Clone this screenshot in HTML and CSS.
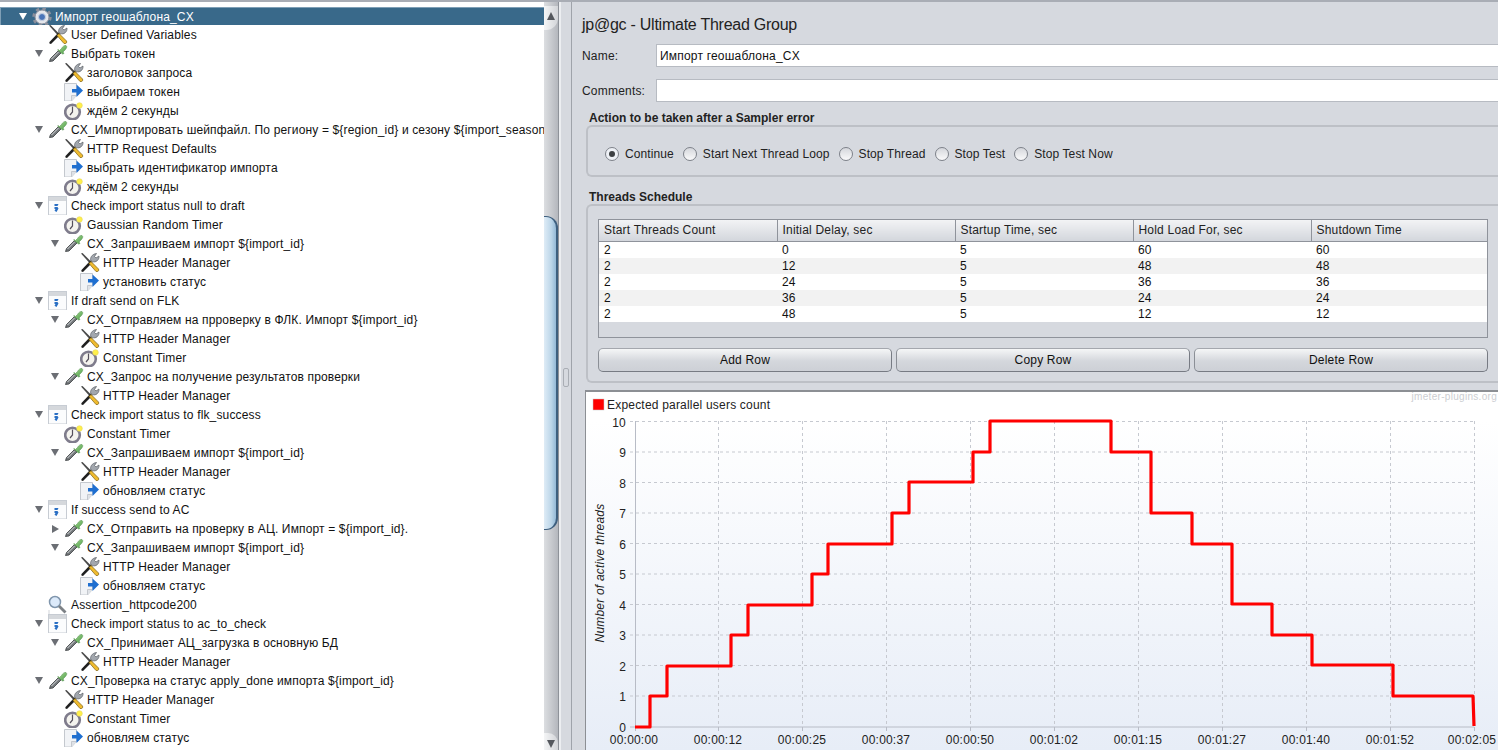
FILE: index.html
```html
<!DOCTYPE html>
<html lang="en">
<head>
    <meta charset="UTF-8">
    <title>Ultimate Thread Group</title>
    <link rel="stylesheet" href="styles.css">
</head>
<body>
    <!-- tree icons -->
    <svg class="defs" width="0" height="0">
        <defs>
            <linearGradient id="dropGreen" x1="0" y1="0" x2="1" y2="1">
                <stop offset="0" stop-color="#a5d78e"/>
                <stop offset="1" stop-color="#4f9f4c"/>
            </linearGradient>
            <linearGradient id="chartBg" x1="0" y1="0" x2="0" y2="1">
                <stop offset="0" stop-color="#ffffff"/>
                <stop offset="0.08" stop-color="#ffffff"/>
                <stop offset="1" stop-color="#e7edf7"/>
            </linearGradient>
            <symbol id="gear" viewBox="0 0 20 20">
                <circle cx="10" cy="10" r="8" fill="none" stroke="#8b8f9c" stroke-width="3.4" stroke-dasharray="3.2 3.1"/>
                <circle cx="10" cy="10" r="7" fill="#e4e6eb" stroke="#8b8f9c" stroke-width="1"/>
                <circle cx="10" cy="10" r="3.5" fill="#4a74b8" stroke="#c6d0e2" stroke-width="1"/>
            </symbol>
            <symbol id="tool" viewBox="0 0 20 20">
                <path d="M1 .5l1.500-.5 8.500 8.500-1.500 1.500z" fill="#4a4a4a"/>
                <path d="M1.500 17l9-9.500 2 2-9.500 9.500c-1.500 0-2-1-1.500-2z" fill="#1f1f1f"/>
                <path d="M11 8c-1.500-3 1-7 5.500-7.500l-2 3 1.500 1.500 3-2c.5 4-3.500 7-6.500 5.500z" fill="#a2a7ae" stroke="#5a5e64" stroke-width=".7"/>
                <path d="M9 10.500l2-2 7.500 7.500c1 1.500-1 3.500-2.500 2.500z" fill="#f0bb2e" stroke="#7a6014" stroke-width=".7"/>
            </symbol>
            <symbol id="dropper" viewBox="0 0 20 20">
                <path d="M1 19.500h13" stroke="#d4d6d9" stroke-width="1"/>
                <path d="M1.500 17.500l1-3 8-8 2.500 2.500-8 8z" fill="#74787b" stroke="#3a3d40" stroke-width=".8"/>
                <path d="M3.500 15l7-7" stroke="#dfe3e4" stroke-width=".9"/>
                <path d="M10 5.500l1.500 1 2-2c1-2 3-3.500 4.500-3 1.500 1 .5 3-1 4.500l-2 2 1 1.500-1.500 .5-5-4z" fill="url(#dropGreen)" stroke="#4d8a49" stroke-width=".5"/>
            </symbol>
            <symbol id="doc" viewBox="0 0 20 20">
                <path d="M.5 1.500h12v12l-5 5.500h-7z" fill="#f1f3f6" stroke="#c4c8ce"/>
                <path d="M7.500 19v-5.500h5" fill="#dfe2e7" stroke="#c4c8ce"/>
                <path d="M8 7h4.500V2.500l6.500 6-6.500 6.500v-4.500H8z" fill="#1f6fd0"/>
            </symbol>
            <symbol id="timer" viewBox="0 0 20 20">
                <circle cx="8.500" cy="11" r="7.300" fill="#f4f3ee" stroke="#7f7c8c" stroke-width="2.600"/>
                <path d="M8.500 5.500v5.500l-2.500 3" fill="none" stroke="#55505c" stroke-width="1.200"/>
                <circle cx="15.500" cy="4.500" r="2.800" fill="#fff04a" stroke="#e5d560" stroke-width=".6"/>
            </symbol>
            <symbol id="ctrl" viewBox="0 0 20 20">
                <rect x=".5" y=".5" width="18" height="18.500" fill="#fbfcfd" stroke="#c7ccd3"/>
                <rect x="1" y="1" width="17" height="4" fill="#d5d8dc"/>
                <path d="M6.500 8h4l-1 2h-3zM6.500 11h3l1 1.500-2 3.500-2-1.200 1-1.800h-1z" fill="#2a6fc4"/>
            </symbol>
            <symbol id="lens" viewBox="0 0 20 20">
                <path d="M1 15v4.500h8" fill="none" stroke="#d2d5da"/>
                <circle cx="7" cy="7" r="5.500" fill="#dceafa" stroke="#7f95ac" stroke-width="1.500"/>
                <path d="M11 11l6.500 6.500" stroke="#7d8186" stroke-width="2.800"/>
            </symbol>
        </defs>
    </svg>

    <div class="topLine"></div>
    <div class="wrapper">
        <div class="treeSide">
            <div class="row selected l0"><span class="arrow down"></span><svg class="ic"><use href="#gear"/></svg><span>Импорт геошаблона_CX</span></div>
            <div class="row l1"><span class="arrow"></span><svg class="ic"><use href="#tool"/></svg><span>User Defined Variables</span></div>
            <div class="row l1"><span class="arrow down"></span><svg class="ic"><use href="#dropper"/></svg><span>Выбрать токен</span></div>
            <div class="row l2"><span class="arrow"></span><svg class="ic"><use href="#tool"/></svg><span>заголовок запроса</span></div>
            <div class="row l2"><span class="arrow"></span><svg class="ic"><use href="#doc"/></svg><span>выбираем токен</span></div>
            <div class="row l2"><span class="arrow"></span><svg class="ic"><use href="#timer"/></svg><span>ждём 2 секунды</span></div>
            <div class="row l1"><span class="arrow down"></span><svg class="ic"><use href="#dropper"/></svg><span>CX_Импортировать шейпфайл. По региону = ${region_id} и сезону ${import_season</span></div>
            <div class="row l2"><span class="arrow"></span><svg class="ic"><use href="#tool"/></svg><span>HTTP Request Defaults</span></div>
            <div class="row l2"><span class="arrow"></span><svg class="ic"><use href="#doc"/></svg><span>выбрать идентификатор импорта</span></div>
            <div class="row l2"><span class="arrow"></span><svg class="ic"><use href="#timer"/></svg><span>ждём 2 секунды</span></div>
            <div class="row l1"><span class="arrow down"></span><svg class="ic"><use href="#ctrl"/></svg><span>Check import status null to draft</span></div>
            <div class="row l2"><span class="arrow"></span><svg class="ic"><use href="#timer"/></svg><span>Gaussian Random Timer</span></div>
            <div class="row l2"><span class="arrow down"></span><svg class="ic"><use href="#dropper"/></svg><span>CX_Запрашиваем импорт ${import_id}</span></div>
            <div class="row l3"><span class="arrow"></span><svg class="ic"><use href="#tool"/></svg><span>HTTP Header Manager</span></div>
            <div class="row l3"><span class="arrow"></span><svg class="ic"><use href="#doc"/></svg><span>установить статус</span></div>
            <div class="row l1"><span class="arrow down"></span><svg class="ic"><use href="#ctrl"/></svg><span>If draft send on FLK</span></div>
            <div class="row l2"><span class="arrow down"></span><svg class="ic"><use href="#dropper"/></svg><span>CX_Отправляем на прроверку в ФЛК. Импорт ${import_id}</span></div>
            <div class="row l3"><span class="arrow"></span><svg class="ic"><use href="#tool"/></svg><span>HTTP Header Manager</span></div>
            <div class="row l3"><span class="arrow"></span><svg class="ic"><use href="#timer"/></svg><span>Constant Timer</span></div>
            <div class="row l2"><span class="arrow down"></span><svg class="ic"><use href="#dropper"/></svg><span>CX_Запрос на получение результатов проверки</span></div>
            <div class="row l3"><span class="arrow"></span><svg class="ic"><use href="#tool"/></svg><span>HTTP Header Manager</span></div>
            <div class="row l1"><span class="arrow down"></span><svg class="ic"><use href="#ctrl"/></svg><span>Check import status to flk_success</span></div>
            <div class="row l2"><span class="arrow"></span><svg class="ic"><use href="#timer"/></svg><span>Constant Timer</span></div>
            <div class="row l2"><span class="arrow down"></span><svg class="ic"><use href="#dropper"/></svg><span>CX_Запрашиваем импорт ${import_id}</span></div>
            <div class="row l3"><span class="arrow"></span><svg class="ic"><use href="#tool"/></svg><span>HTTP Header Manager</span></div>
            <div class="row l3"><span class="arrow"></span><svg class="ic"><use href="#doc"/></svg><span>обновляем статус</span></div>
            <div class="row l1"><span class="arrow down"></span><svg class="ic"><use href="#ctrl"/></svg><span>If success send to AC</span></div>
            <div class="row l2"><span class="arrow right"></span><svg class="ic"><use href="#dropper"/></svg><span>CX_Отправить на проверку в АЦ. Импорт = ${import_id}.</span></div>
            <div class="row l2"><span class="arrow down"></span><svg class="ic"><use href="#dropper"/></svg><span>CX_Запрашиваем импорт ${import_id}</span></div>
            <div class="row l3"><span class="arrow"></span><svg class="ic"><use href="#tool"/></svg><span>HTTP Header Manager</span></div>
            <div class="row l3"><span class="arrow"></span><svg class="ic"><use href="#doc"/></svg><span>обновляем статус</span></div>
            <div class="row l1"><span class="arrow"></span><svg class="ic"><use href="#lens"/></svg><span>Assertion_httpcode200</span></div>
            <div class="row l1"><span class="arrow down"></span><svg class="ic"><use href="#ctrl"/></svg><span>Check import status to ac_to_check</span></div>
            <div class="row l2"><span class="arrow down"></span><svg class="ic"><use href="#dropper"/></svg><span>CX_Принимает АЦ_загрузка в основную БД</span></div>
            <div class="row l3"><span class="arrow"></span><svg class="ic"><use href="#tool"/></svg><span>HTTP Header Manager</span></div>
            <div class="row l1"><span class="arrow down"></span><svg class="ic"><use href="#dropper"/></svg><span>CX_Проверка на статус apply_done импорта ${import_id}</span></div>
            <div class="row l2"><span class="arrow"></span><svg class="ic"><use href="#tool"/></svg><span>HTTP Header Manager</span></div>
            <div class="row l2"><span class="arrow"></span><svg class="ic"><use href="#timer"/></svg><span>Constant Timer</span></div>
            <div class="row l2"><span class="arrow"></span><svg class="ic"><use href="#doc"/></svg><span>обновляем статус</span></div>
        </div>

        <div class="scrollSide">
            <div class="scrollBtn"><span class="btnUp"></span></div>
            <div class="scrollTrack"><div class="scrollThumb"></div></div>
            <div class="scrollBtn bottom"><span class="btnDown"></span></div>
        </div>

        <div class="splitter"><div class="grip"></div></div>

        <div class="mainSide">
            <div class="title">jp@gc - Ultimate Thread Group</div>
            <div class="field">
                <label>Name:</label>
                <div class="textBox">Импорт геошаблона_CX</div>
            </div>
            <div class="field comments">
                <label>Comments:</label>
                <div class="textBox"></div>
            </div>

            <div class="groupTitle first">Action to be taken after a Sampler error</div>
            <div class="groupBox radios">
                <div class="radio on"><i></i>Continue</div>
                <div class="radio"><i></i>Start Next Thread Loop</div>
                <div class="radio"><i></i>Stop Thread</div>
                <div class="radio"><i></i>Stop Test</div>
                <div class="radio"><i></i>Stop Test Now</div>
            </div>

            <div class="groupTitle">Threads Schedule</div>
            <div class="groupBox schedule">
                <div class="tableWrap">
                    <table>
                        <tr><th>Start Threads Count</th><th>Initial Delay, sec</th><th>Startup Time, sec</th><th>Hold Load For, sec</th><th>Shutdown Time</th></tr>
                        <tr><td>2</td><td>0</td><td>5</td><td>60</td><td>60</td></tr>
                        <tr><td>2</td><td>12</td><td>5</td><td>48</td><td>48</td></tr>
                        <tr><td>2</td><td>24</td><td>5</td><td>36</td><td>36</td></tr>
                        <tr><td>2</td><td>36</td><td>5</td><td>24</td><td>24</td></tr>
                        <tr><td>2</td><td>48</td><td>5</td><td>12</td><td>12</td></tr>
                    </table>
                </div>
                <div class="buttons">
                    <button type="button">Add Row</button>
                    <button type="button">Copy Row</button>
                    <button type="button">Delete Row</button>
                </div>
            </div>

            <div class="chartBox">
                <svg class="chart" viewBox="585 392 913 358" width="913" height="358">
                    <rect x="585" y="392" width="913" height="358" fill="url(#chartBg)"/>
                    <text class="brand" x="1497" y="400" text-anchor="end">jmeter-plugins.org</text>
                    <rect x="593" y="399" width="11" height="11" fill="#ff0000" stroke="#c8c8c8" stroke-width=".5"/>
                    <text class="label" x="607" y="409">Expected parallel users count</text>

                    <!-- grid -->
                    <path class="grid" d="M630 421.500H1474M630 452H1474M630 482.500H1474M630 513H1474M630 543.500H1474M630 574H1474M630 604.500H1474M630 635H1474M630 665.500H1474M630 696H1474"/>
                    <path class="grid" d="M718.500 421V731M802.500 421V731M886.500 421V731M970.500 421V731M1054.500 421V731M1138.500 421V731M1222.500 421V731M1306.500 421V731M1390.500 421V731M1474.500 421V731"/>
                    <path class="axis" d="M635.500 421V727M630 727H1474M635.500 727V731M718.500 727V731M802.500 727V731M886.500 727V731M970.500 727V731M1054.500 727V731M1138.500 727V731M1222.500 727V731M1306.500 727V731M1390.500 727V731M1474.500 727V731"/>

                    <!-- y labels -->
                    <text class="label" x="626" y="427" text-anchor="end">10</text>
                    <text class="label" x="626" y="457" text-anchor="end">9</text>
                    <text class="label" x="626" y="488" text-anchor="end">8</text>
                    <text class="label" x="626" y="518" text-anchor="end">7</text>
                    <text class="label" x="626" y="549" text-anchor="end">6</text>
                    <text class="label" x="626" y="579" text-anchor="end">5</text>
                    <text class="label" x="626" y="610" text-anchor="end">4</text>
                    <text class="label" x="626" y="640" text-anchor="end">3</text>
                    <text class="label" x="626" y="671" text-anchor="end">2</text>
                    <text class="label" x="626" y="701" text-anchor="end">1</text>
                    <text class="label" x="626" y="732" text-anchor="end">0</text>
                    <text class="axisName" transform="translate(604 573) rotate(-90)" text-anchor="middle">Number of active threads</text>

                    <!-- x labels -->
                    <text class="label" x="634" y="744" text-anchor="middle">00:00:00</text>
                    <text class="label" x="718" y="744" text-anchor="middle">00:00:12</text>
                    <text class="label" x="802" y="744" text-anchor="middle">00:00:25</text>
                    <text class="label" x="886" y="744" text-anchor="middle">00:00:37</text>
                    <text class="label" x="970" y="744" text-anchor="middle">00:00:50</text>
                    <text class="label" x="1054" y="744" text-anchor="middle">00:01:02</text>
                    <text class="label" x="1138" y="744" text-anchor="middle">00:01:15</text>
                    <text class="label" x="1222" y="744" text-anchor="middle">00:01:27</text>
                    <text class="label" x="1306" y="744" text-anchor="middle">00:01:40</text>
                    <text class="label" x="1390" y="744" text-anchor="middle">00:01:52</text>
                    <text class="label" x="1472" y="744" text-anchor="middle">00:02:05</text>

                    <polyline class="line" points="635,727 650,727 650,696 667,696 667,666 731,666 731,635 748,635 748,605 812,605 812,574 828,574 828,544 892,544 892,513 909,513 909,482 973,482 973,452 990,452 990,421 1111,421 1111,452 1151,452 1151,513 1192,513 1192,544 1232,544 1232,604 1272,604 1272,635 1312,635 1312,665 1393,665 1393,696 1473,696 1474,726"/>
                </svg>
            </div>
        </div>
    </div>
</body>
</html>
```

FILE: styles.css
```css
html, body {
    margin: 0;
    height: 750px;
    overflow: hidden;
    background-color: #d6d9df;
    font-family: "Liberation Sans", Arial, sans-serif;
    font-size: 12px;
    letter-spacing: .2px;
    color: #111;
}
.defs {
    display: block;
    height: 0;
}
.topLine {
    height: 2px;
    background-color: #a9adb5;
}
.wrapper {
    display: flex;
    height: 748px;
}

/* left tree */
.treeSide {
    width: 544px;
    flex: none;
    box-sizing: border-box;
    padding-top: 4px;
    background-color: #fff;
    letter-spacing: .15px;
    overflow: hidden;
}
.row {
    display: flex;
    align-items: center;
    height: 19px;
    white-space: nowrap;
    overflow: hidden;
}
.row.selected {
    height: 18px;
    margin-top: 1px;
    padding-left: 14px;
    background-color: #39698a;
    color: #fff;
    border-top: 1px solid #7f9fb6;
    border-left: 1px solid #7f9fb6;
    box-sizing: border-box;
}
.l0 { padding-left: 15px; }
.l1 { padding-left: 31px; }
.l2 { padding-left: 47px; }
.l3 { padding-left: 63px; }
.arrow {
    flex: none;
    width: 16px;
    height: 10px;
    margin-right: 1px;
    position: relative;
}
.arrow.down::before {
    content: "";
    position: absolute;
    left: 4px;
    top: 1px;
    border-left: 4px solid transparent;
    border-right: 4px solid transparent;
    border-top: 7px solid #6b6e74;
}
.arrow.right::before {
    content: "";
    position: absolute;
    left: 5px;
    top: 1px;
    border-top: 4px solid transparent;
    border-bottom: 4px solid transparent;
    border-left: 7px solid #6b6e74;
}
.selected .arrow.down::before {
    border-top-color: #fff;
}
.ic {
    flex: none;
    width: 20px;
    height: 20px;
    margin-right: 3px;
    overflow: visible;
}

/* scrollbar of the tree */
.scrollSide {
    width: 15px;
    flex: none;
    display: flex;
    flex-direction: column;
    padding-top: 4px;
    box-sizing: border-box;
    background: linear-gradient(to right, #dcdee1, #b4b7bd);
    border-right: 1px solid #8e9299;
}
.scrollBtn {
    height: 24px;
    flex: none;
    display: flex;
    justify-content: center;
    padding-top: 6px;
    box-sizing: border-box;
    background: linear-gradient(to right, #f4f5f6, #d2d4d8);
    border-bottom-right-radius: 12px;
}
.scrollBtn.bottom {
    height: 17px;
    padding-top: 7px;
    border-radius: 0;
    border-top-right-radius: 10px;
}
.btnUp {
    width: 0;
    height: 0;
    border-left: 4px solid transparent;
    border-right: 4px solid transparent;
    border-bottom: 8px solid #55585e;
}
.btnDown {
    width: 0;
    height: 0;
    border-left: 4px solid transparent;
    border-right: 4px solid transparent;
    border-top: 8px solid #55585e;
}
.scrollTrack {
    flex: 1;
    padding-top: 186px;
}
.scrollThumb {
    height: 314px;
    box-sizing: border-box;
    background: linear-gradient(to right, #dfecf6, #bcd6e9 60%, #94b9d6);
    border-top: 1px solid #3e5f7e;
    border-right: 2px solid #3e5f7e;
    border-bottom: 1px solid #3e5f7e;
    border-top-right-radius: 12px;
    border-bottom-right-radius: 12px;
}

/* splitter */
.splitter {
    width: 13px;
    flex: none;
    display: flex;
    align-items: center;
    justify-content: center;
    box-sizing: border-box;
    border-left: 2px solid #eceef1;
    border-right: 1px solid #9fa3aa;
    padding-top: 2px;
}
.grip {
    width: 4px;
    height: 17px;
    border: 1px solid #a9adb4;
    border-radius: 2px;
}

/* right side */
.mainSide {
    flex: 1;
    min-width: 0;
    box-sizing: border-box;
    padding-left: 10px;
    overflow: hidden;
}
.title {
    height: 42px;
    line-height: 45px;
    font-size: 16px;
    letter-spacing: -.25px;
    color: #222;
}
.field {
    display: flex;
    align-items: center;
    height: 23px;
}
.field.comments {
    margin-top: 12px;
}
.field label {
    width: 74px;
    flex: none;
    color: #222;
}
.textBox {
    flex: none;
    width: 860px;
    height: 23px;
    line-height: 22px;
    box-sizing: border-box;
    padding-left: 3px;
    background-color: #fff;
    border: 1px solid #b7bbc2;
}
.groupTitle {
    margin: 0 0 0 7px;
    height: 18px;
    line-height: 22px;
    font-weight: bold;
    letter-spacing: 0;
    color: #222;
}
.groupTitle.first {
    margin-top: 5px;
}
.groupBox {
    margin: 0 -8px 0 4px;
    box-sizing: border-box;
    border: 2px solid #bdc0c6;
    border-right: 0;
    border-radius: 6px;
}
.radios {
    height: 52px;
    padding-left: 17px;
    padding-top: 5px;
    margin-bottom: 9px;
    display: flex;
    align-items: center;
    gap: 9px;
    letter-spacing: .1px;
    color: #222;
}
.radio {
    display: flex;
    align-items: center;
    gap: 6px;
}
.radio i {
    width: 14px;
    height: 14px;
    box-sizing: border-box;
    border: 1px solid #7d8189;
    border-radius: 50%;
    background: linear-gradient(#d5d7dc, #fafafb);
    position: relative;
}
.radio.on i {
    background: #eef1f6;
}
.radio.on i::after {
    content: "";
    position: absolute;
    left: 3px;
    top: 3px;
    width: 6px;
    height: 6px;
    border-radius: 50%;
    background-color: #3d4043;
}
.schedule {
    height: 179px;
    padding: 13px 0 0 10px;
}
.tableWrap {
    width: 890px;
    height: 119px;
    box-sizing: border-box;
    border: 1px solid #8f939b;
}
table {
    width: 888px;
    border-collapse: collapse;
    table-layout: fixed;
}
th {
    width: 178px;
    height: 21px;
    padding: 0 0 0 5px;
    box-sizing: border-box;
    font-weight: normal;
    text-align: left;
    color: #222;
    background: linear-gradient(#f2f3f5, #d3d6dc);
    border-right: 1px solid #8f939b;
    border-bottom: 1px solid #8f939b;
}
th:last-child {
    width: 176px;
    border-right: 0;
}
td {
    height: 16px;
    line-height: 16px;
    padding: 0 0 0 5px;
    box-sizing: border-box;
    background-color: #fff;
}
tr:nth-child(odd) td {
    background-color: #f2f2f2;
}
.buttons {
    display: flex;
    gap: 4px;
    width: 890px;
    margin-top: 10px;
}
button {
    flex: 1;
    height: 24px;
    padding: 0;
    font: inherit;
    letter-spacing: inherit;
    color: #111;
    border: 1px solid #777b83;
    border-top-color: #a4a7ae;
    border-left-color: #8b8f96;
    border-radius: 5px;
    background: linear-gradient(#f5f6f7, #d4d7dc 55%, #cdd0d6);
}

/* chart */
.chartBox {
    margin: 7px -8px 0 3px;
    height: 360px;
    box-sizing: border-box;
    border-top: 2px solid #8c8f94;
    border-left: 1px solid #8c8f94;
    overflow: hidden;
}
.chart {
    display: block;
    margin-left: -1px;
}
.chart text {
    font-family: "Liberation Sans", Arial, sans-serif;
}
.label {
    font-size: 12px;
    fill: #222;
}
.brand {
    font-size: 10px;
    fill: #ccced2;
    letter-spacing: .3px;
}
.axisName {
    font-size: 12px;
    font-style: italic;
    fill: #222;
}
.grid {
    fill: none;
    stroke: #c6c9d0;
    stroke-dasharray: 3 3;
}
.axis {
    fill: none;
    stroke: #b8bcc6;
}
.line {
    fill: none;
    stroke: #ff0000;
    stroke-width: 3.2;
    stroke-linejoin: round;
}
```
